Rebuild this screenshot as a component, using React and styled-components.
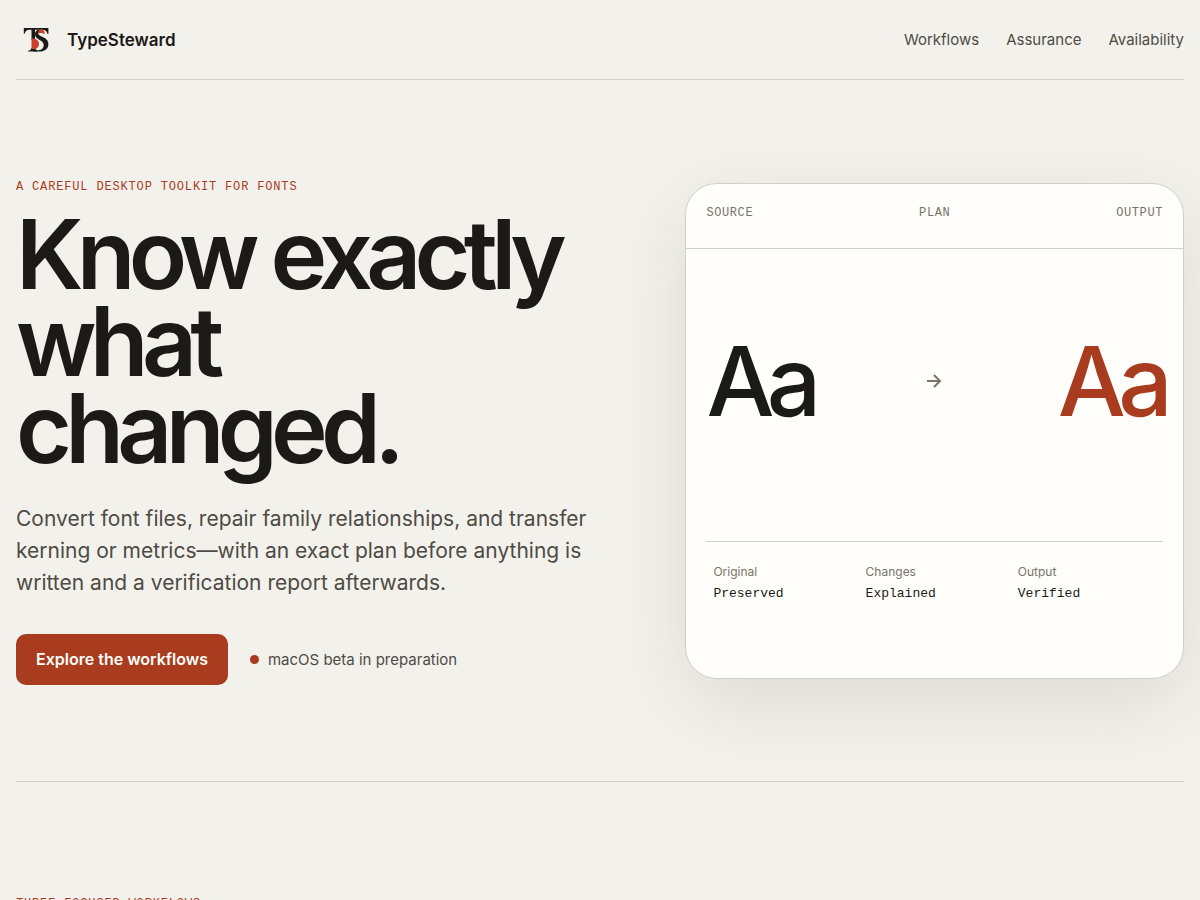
import React from "react";
import styled, { createGlobalStyle } from "styled-components";

const sans = `Inter, "Liberation Sans", sans-serif`;
const mono = `"Liberation Mono", monospace`;

const GlobalStyle = createGlobalStyle`
  *, *::before, *::after { box-sizing: border-box; }
  body {
    margin: 0;
    background: #f3f1ec;
    color: #1b1a16;
    font-family: ${sans};
    font-size: 16px;
  }
  h1, p, dl, dd { margin: 0; }
  a { color: inherit; text-decoration: none; }
`;

const Page = styled.div`
  padding: 0 16px;
`;

const Header = styled.header`
  display: flex;
  align-items: center;
  justify-content: space-between;
  height: 80px;
  border-bottom: 1px solid #d1cfc8;
`;

const Brand = styled.a`
  display: flex;
  align-items: center;
  gap: 11px;
  font-size: 17px;
  font-weight: 600;

  svg { width: 40px; height: 40px; }
`;

const Nav = styled.nav`
  display: flex;
  gap: 27px;
  color: #4e4b44;
  font-size: 15px;
`;

const Hero = styled.section`
  display: grid;
  grid-template-columns: 1.15fr 1fr;
  align-items: center;
  gap: 96px;
  padding: 96px 0;
  border-bottom: 1px solid #d1cfc8;
`;

const Eyebrow = styled.p`
  color: #a93c1e;
  font-family: ${mono};
  font-size: 12px;
  line-height: 22px;
  letter-spacing: 0.07em;
  text-transform: uppercase;
`;

const Title = styled.h1`
  margin-top: 13px;
  font-size: 96px;
  font-weight: 600;
  line-height: 87px;
  letter-spacing: -0.07em;
`;

const Lead = styled.p`
  margin-top: 31px;
  color: #4e4b44;
  font-size: 21px;
  line-height: 32px;
`;

const Actions = styled.div`
  display: flex;
  align-items: center;
  gap: 22px;
  margin-top: 35px;
`;

const PrimaryLink = styled.a`
  padding: 0 20px;
  border-radius: 10px;
  background: #a93c1e;
  color: #fffefa;
  font-size: 16px;
  font-weight: 600;
  line-height: 51px;
`;

const Status = styled.p`
  display: flex;
  align-items: center;
  gap: 9px;
  color: #4e4b44;
  font-size: 15px;

  &::before {
    content: "";
    width: 9px;
    height: 9px;
    border-radius: 50%;
    background: #a93c1e;
  }
`;

const Card = styled.div`
  display: flex;
  flex-direction: column;
  min-height: 496px;
  border: 1px solid #d1cfc8;
  border-radius: 32px;
  background: #fffefa;
  box-shadow: 0 24px 80px rgba(50, 42, 30, 0.1);
`;

const CardHead = styled.div`
  display: flex;
  justify-content: space-between;
  padding: 20px 20px 26px;
  border-bottom: 1px solid #d1cfc8;
  color: #77736a;
  font-family: ${mono};
  font-size: 12px;
  line-height: 18px;
  letter-spacing: 0.05em;
  text-transform: uppercase;
`;

const Specimen = styled.div`
  display: flex;
  flex: 1;
  align-items: center;
  justify-content: space-between;
  padding: 0 18px 28px 20px;

  svg { width: 20px; height: 20px; color: #77736a; }
`;

const Glyphs = styled.span`
  color: ${(p) => (p.$accent ? "#a93c1e" : "#1b1a16")};
  font-size: 96px;
  font-weight: 500;
  line-height: 96px;
  letter-spacing: -0.08em;
`;

const Facts = styled.dl`
  display: grid;
  grid-template-columns: repeat(3, 1fr);
  margin: 0 20px;
  padding: 20px 0 72px;
  border-top: 1px solid #d1cfc8;
`;

const Fact = styled.div`
  padding-left: 7px;

  dt { color: #77736a; font-size: 12px; line-height: 20px; }
  dd { font-family: ${mono}; font-size: 13px; line-height: 24px; }
`;

const Workflows = styled.section`
  padding: 111px 0 96px;
`;

const facts = [
  ["Original", "Preserved"],
  ["Changes", "Explained"],
  ["Output", "Verified"],
];

const Logo = () => (
  <svg viewBox="0 0 40 40" aria-hidden="true">
    <path
      fill="#1b1a16"
      d="M7.800 8h24.600v6h-.8c-.8-2.800-2.400-4.200-5.600-4.200h-7V20h-3.500V9.800h-2c-2.800 0-4.200 1.400-4.900 4h-.8zM15.500 28h3.500l2 3.600h-9v-.8c2-.3 3-1.200 3.500-2.800z"
    />
    <path fill="#c8432a" d="M21 10c2.500-1.500 6-.8 7.500 1.500v3c-2-1.500-4-1.800-7.500-.8z" />
    <path fill="#c8432a" d="M15.500 19c1.500-.8 3.500-.6 5 .5 2.800 2 3.400 5.200 1.400 7.700-1.700 2-4.200 2.300-6.400 1.600z" />
    <path
      fill="#1b1a16"
      d="M23 9.600c-2.600.6-4 2.300-4 4.700 0 3 2.200 4.300 4.500 5.600 2.800 1.500 4.200 2.900 4.200 5.200 0 2.900-2 5.100-5 5.100-1.600 0-3-.4-4.200-1.300l-1.500 2.700h6.700c5.200 0 8.700-3 8.700-7.300 0-4-2.500-5.700-6-7.500-2.700-1.400-4.300-2.100-4.300-3.900 0-1.500.6-2.500 1.900-3.100z"
    />
  </svg>
);

export default function App() {
  return (
    <>
      <GlobalStyle />
      <Page id="top">
        <Header>
          <Brand href="#top"><Logo />TypeSteward</Brand>
          <Nav>
            <a href="#workflows">Workflows</a>
            <a href="#assurance">Assurance</a>
            <a href="#availability">Availability</a>
          </Nav>
        </Header>
        <main>
          <Hero>
            <div>
              <Eyebrow>A careful desktop toolkit for fonts</Eyebrow>
              <Title>Know exactly what changed.</Title>
              <Lead>
                Convert font files, repair family relationships, and transfer kerning or
                metrics—with an exact plan before anything is written and a verification
                report afterwards.
              </Lead>
              <Actions>
                <PrimaryLink href="#workflows">Explore the workflows</PrimaryLink>
                <Status>macOS beta in preparation</Status>
              </Actions>
            </div>
            <Card>
              <CardHead><span>Source</span><span>Plan</span><span>Output</span></CardHead>
              <Specimen>
                <Glyphs>Aa</Glyphs>
                <svg viewBox="0 0 20 20" fill="none" stroke="currentColor" strokeWidth="2" aria-hidden="true">
                  <path d="M1 10h13M8 4l6 6-6 6" />
                </svg>
                <Glyphs $accent>Aa</Glyphs>
              </Specimen>
              <Facts>
                {facts.map(([k, v]) => (
                  <Fact key={k}><dt>{k}</dt><dd>{v}</dd></Fact>
                ))}
              </Facts>
            </Card>
          </Hero>
          <Workflows id="workflows">
            <Eyebrow>Three focused workflows</Eyebrow>
          </Workflows>
        </main>
      </Page>
    </>
  );
}
